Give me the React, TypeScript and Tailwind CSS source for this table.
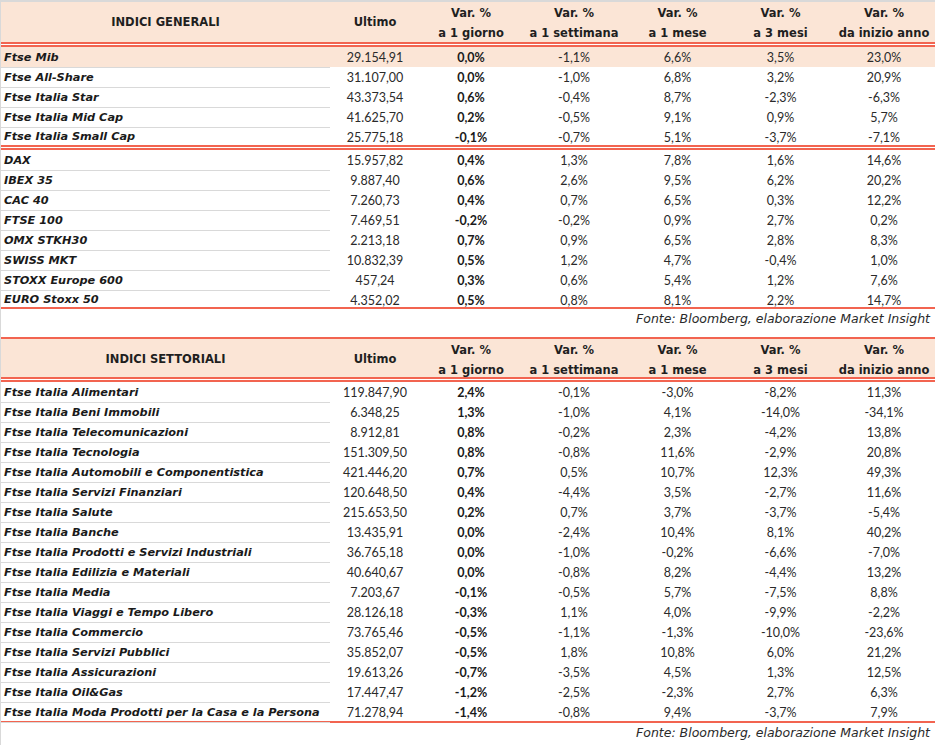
import React from 'react';

type Row = [string, string, string, string, string, string, string];

const GENERALI_IT: Row[] = [
  ['Ftse Mib', '29.154,91', '0,0%', '-1,1%', '6,6%', '3,5%', '23,0%'],
  ['Ftse All-Share', '31.107,00', '0,0%', '-1,0%', '6,8%', '3,2%', '20,9%'],
  ['Ftse Italia Star', '43.373,54', '0,6%', '-0,4%', '8,7%', '-2,3%', '-6,3%'],
  ['Ftse Italia Mid Cap', '41.625,70', '0,2%', '-0,5%', '9,1%', '0,9%', '5,7%'],
  ['Ftse Italia Small Cap', '25.775,18', '-0,1%', '-0,7%', '5,1%', '-3,7%', '-7,1%'],
];

const GENERALI_EU: Row[] = [
  ['DAX', '15.957,82', '0,4%', '1,3%', '7,8%', '1,6%', '14,6%'],
  ['IBEX 35', '9.887,40', '0,6%', '2,6%', '9,5%', '6,2%', '20,2%'],
  ['CAC 40', '7.260,73', '0,4%', '0,7%', '6,5%', '0,3%', '12,2%'],
  ['FTSE 100', '7.469,51', '-0,2%', '-0,2%', '0,9%', '2,7%', '0,2%'],
  ['OMX STKH30', '2.213,18', '0,7%', '0,9%', '6,5%', '2,8%', '8,3%'],
  ['SWISS MKT', '10.832,39', '0,5%', '1,2%', '4,7%', '-0,4%', '1,0%'],
  ['STOXX Europe 600', '457,24', '0,3%', '0,6%', '5,4%', '1,2%', '7,6%'],
  ['EURO Stoxx 50', '4.352,02', '0,5%', '0,8%', '8,1%', '2,2%', '14,7%'],
];

const SETTORIALI: Row[] = [
  ['Ftse Italia Alimentari', '119.847,90', '2,4%', '-0,1%', '-3,0%', '-8,2%', '11,3%'],
  ['Ftse Italia Beni Immobili', '6.348,25', '1,3%', '-1,0%', '4,1%', '-14,0%', '-34,1%'],
  ['Ftse Italia Telecomunicazioni', '8.912,81', '0,8%', '-0,2%', '2,3%', '-4,2%', '13,8%'],
  ['Ftse Italia Tecnologia', '151.309,50', '0,8%', '-0,8%', '11,6%', '-2,9%', '20,8%'],
  ['Ftse Italia Automobili e Componentistica', '421.446,20', '0,7%', '0,5%', '10,7%', '12,3%', '49,3%'],
  ['Ftse Italia Servizi Finanziari', '120.648,50', '0,4%', '-4,4%', '3,5%', '-2,7%', '11,6%'],
  ['Ftse Italia Salute', '215.653,50', '0,2%', '0,7%', '3,7%', '-3,7%', '-5,4%'],
  ['Ftse Italia Banche', '13.435,91', '0,0%', '-2,4%', '10,4%', '8,1%', '40,2%'],
  ['Ftse Italia Prodotti e Servizi Industriali', '36.765,18', '0,0%', '-1,0%', '-0,2%', '-6,6%', '-7,0%'],
  ['Ftse Italia Edilizia e Materiali', '40.640,67', '0,0%', '-0,8%', '8,2%', '-4,4%', '13,2%'],
  ['Ftse Italia Media', '7.203,67', '-0,1%', '-0,5%', '5,7%', '-7,5%', '8,8%'],
  ['Ftse Italia Viaggi e Tempo Libero', '28.126,18', '-0,3%', '1,1%', '4,0%', '-9,9%', '-2,2%'],
  ['Ftse Italia Commercio', '73.765,46', '-0,5%', '-1,1%', '-1,3%', '-10,0%', '-23,6%'],
  ['Ftse Italia Servizi Pubblici', '35.852,07', '-0,5%', '1,8%', '10,8%', '6,0%', '21,2%'],
  ['Ftse Italia Assicurazioni', '19.613,26', '-0,7%', '-3,5%', '4,5%', '1,3%', '12,5%'],
  ['Ftse Italia Oil&Gas', '17.447,47', '-1,2%', '-2,5%', '-2,3%', '2,7%', '6,3%'],
  ['Ftse Italia Moda Prodotti per la Casa e la Persona', '71.278,94', '-1,4%', '-0,8%', '9,4%', '-3,7%', '7,9%'],
];

const COLS = 'grid grid-cols-[329px_90px_102px_104px_103px_103px_104px]';
const WIDE = "font-['DejaVu_Sans',sans-serif]";

const DoubleLine = () => (
  <div>
    <div className="h-[2px] bg-[#f26450]" />
    <div className="h-px bg-white" />
    <div className="h-[2px] bg-[#f26450]" />
  </div>
);

const Header = ({ title, height }: { title: string; height: string }) => (
  <div className={`${COLS} ${height} ${WIDE} bg-[#fbe5d6] text-[11.5px] font-bold text-[#1f1f1f]`}>
    <div className="flex items-center justify-center pt-px">{title}</div>
    <div className="flex items-center justify-center pt-px">Ultimo</div>
    {['a 1 giorno', 'a 1 settimana', 'a 1 mese', 'a 3 mesi', 'da inizio anno'].map((sub) => (
      <div key={sub} className="flex flex-col items-center justify-center pt-px leading-[20px]">
        <span>Var. %</span>
        <span>{sub}</span>
      </div>
    ))}
  </div>
);

const DataRow = ({ row, last, highlight }: { row: Row; last?: boolean; highlight?: boolean }) => (
  <div className={`${COLS} ${last ? 'h-[18px]' : 'h-[20px]'} ${highlight ? 'bg-[#fbe5d6]' : ''} text-[12.5px] text-[#2a2a2a]`}>
    <div
      className={`flex items-center pl-[3px] ${last ? 'pt-px' : 'pt-[3px]'} ${WIDE} text-[11.3px] font-bold italic text-[#1a1a1a] ${last ? '' : 'border-b border-[#d9d9d9]'}`}
    >
      {row[0]}
    </div>
    <div className="flex items-center justify-center pt-[2px]">{row[1]}</div>
    <div className="flex items-center justify-center pt-[2px] font-bold text-[#1a1a1a]">{row[2]}</div>
    {row.slice(3).map((v, i) => (
      <div key={i} className="flex items-center justify-center pt-[2px]">
        {v}
      </div>
    ))}
  </div>
);

const Fonte = ({ height }: { height: string }) => (
  <div className={`${height} ${WIDE} flex justify-end pr-[5px] text-[12.5px] italic leading-[20px] text-[#2a2a2a]`}>
    Fonte: Bloomberg, elaborazione Market Insight
  </div>
);

export default function App() {
  return (
    <div className="h-[745px] w-[935px] overflow-hidden border-l border-t-2 border-[#d9d9d9] bg-white font-['Lato',sans-serif]">
      <Header title="INDICI GENERALI" height="h-[40px]" />
      <DoubleLine />
      {GENERALI_IT.map((r, i) => (
        <DataRow key={r[0]} row={r} highlight={i === 0} last={i === GENERALI_IT.length - 1} />
      ))}
      <DoubleLine />
      {GENERALI_EU.map((r, i) => (
        <DataRow key={r[0]} row={r} last={i === GENERALI_EU.length - 1} />
      ))}
      <div className="-mt-px h-[2px] bg-[#f26450]" />
      <Fonte height="h-[28px]" />
      <div className="h-[2px] bg-[#f26450]" />
      <Header title="INDICI SETTORIALI" height="h-[38px]" />
      <DoubleLine />
      {SETTORIALI.map((r) => (
        <DataRow key={r[0]} row={r} />
      ))}
      <div className="-mt-px h-[2px] bg-[#f26450]" />
      <Fonte height="h-[20px]" />
    </div>
  );
}
